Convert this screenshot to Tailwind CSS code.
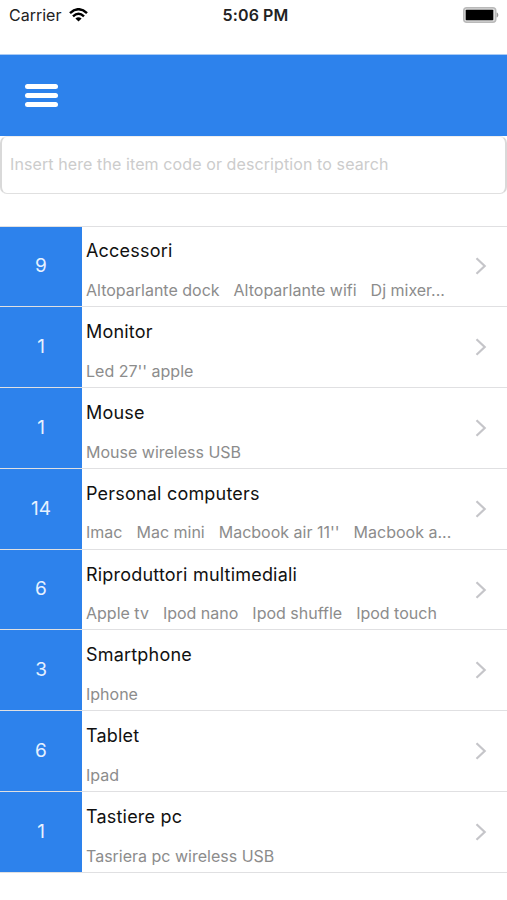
<!DOCTYPE html>
<html lang="en">
<head>
<meta charset="utf-8">
<title>Item categories</title>
<script src="https://cdn.jsdelivr.net/npm/@tailwindcss/browser@4"></script>
</head>
<body class="bg-white font-['Inter','Liberation_Sans',sans-serif] antialiased">
<div class="flex h-[900px] w-[507px] flex-col overflow-hidden bg-white">
  <header class="grid h-[54px] shrink-0 grid-cols-3 items-start pt-[5px] pr-[8px] pl-[9px] text-[#222]">
    <div class="flex h-5 items-center gap-2">
      <span class="text-[16px] leading-5">Carrier</span>
      <svg class="h-[14px] w-[19px]" viewBox="0 0 19 14" fill="none" stroke="#000" stroke-width="2.5">
        <path d="M1 5.1Q9.5-2.6 18 5.1"/><path d="M4 8.3Q9.5 3.3 15 8.3"/><path d="M9.5 13.5L6.4 10.5Q9.5 7.8 12.6 10.5Z" fill="#000" stroke="none"/>
      </svg>
    </div>
    <span class="pl-[3px] text-center text-[16px] leading-5 font-semibold tracking-[0.1px]">5:06 PM</span>
    <div class="flex h-5 items-center justify-end">
      <svg class="h-4 w-9" viewBox="0 0 36 16"><rect x=".75" y=".75" width="32" height="14.5" rx="3" fill="#ddd" stroke="#b9b9b9" stroke-width="1.5"/><rect x="2.7" y="2.8" width="27.6" height="10.4" rx=".8" fill="#000"/><path d="M34 5.8q2.2 2.2 0 4.4z" fill="#999" stroke="#999" stroke-width=".6"/></svg>
    </div>
  </header>
  <nav class="flex h-[82px] shrink-0 items-center border-t border-[#a9cbf5] bg-[#2d82ec] pl-[25px]">
    <button class="flex w-[33px] flex-col gap-1" aria-label="Menu">
      <span class="h-[5px] rounded-full bg-white"></span><span class="h-[5px] rounded-full bg-white"></span><span class="h-[5px] rounded-full bg-white"></span>
    </button>
  </nav>
  <div class="h-[58px] shrink-0 rounded-[7px] border border-x-2 border-t-[#eee] border-x-[#d9d9d9] border-b-[#e0e0e0] pl-2 text-[16px] leading-[55px] tracking-[0.1px] text-[#ccc]">Insert here the item code or description to search</div>
  <main id="list" class="mt-[31.5px] border-t-[1.5px] border-[#e0e0e2]"></main>
</div>
<script>
const rows = [
  [9, "Accessori", ["Altoparlante dock", "Altoparlante wifi", "Dj mixer..."]],
  [1, "Monitor", ["Led 27'' apple"]],
  [1, "Mouse", ["Mouse wireless USB"]],
  [14, "Personal computers", ["Imac", "Mac mini", "Macbook air 11''", "Macbook a..."]],
  [6, "Riproduttori multimediali", ["Apple tv", "Ipod nano", "Ipod shuffle", "Ipod touch"]],
  [3, "Smartphone", ["Iphone"]],
  [6, "Tablet", ["Ipad"]],
  [1, "Tastiere pc", ["Tasriera pc wireless USB"]]
];
document.getElementById("list").innerHTML = rows.map(([n, title, items]) => `
<div class="flex h-[80.8px] border-b-[1.5px] border-[#e0e0e2]">
  <div class="flex w-[82px] shrink-0 items-center justify-center bg-[#2d82ec] text-[19px] text-[#e6f1ff]">${n}</div>
  <div class="min-w-0 flex-1 pt-[12.9px] pl-1 whitespace-nowrap">
    <h2 class="text-[18px] leading-6 tracking-[0.2px] text-[#111]">${title}</h2>
    <div class="mt-[16.6px] flex gap-[14px] text-[16px] leading-5 text-[#8c8c8c]">${items.map(i => `<span>${i}</span>`).join("")}</div>
  </div>
  <svg class="mr-5 h-[18px] w-3 shrink-0 self-center" viewBox="0 0 12 18" fill="none" stroke="#c5c5c9" stroke-width="2.2"><path d="M1.5 1.2L9.7 9L1.5 16.8"/></svg>
</div>`).join("");
</script>
</body>
</html>
